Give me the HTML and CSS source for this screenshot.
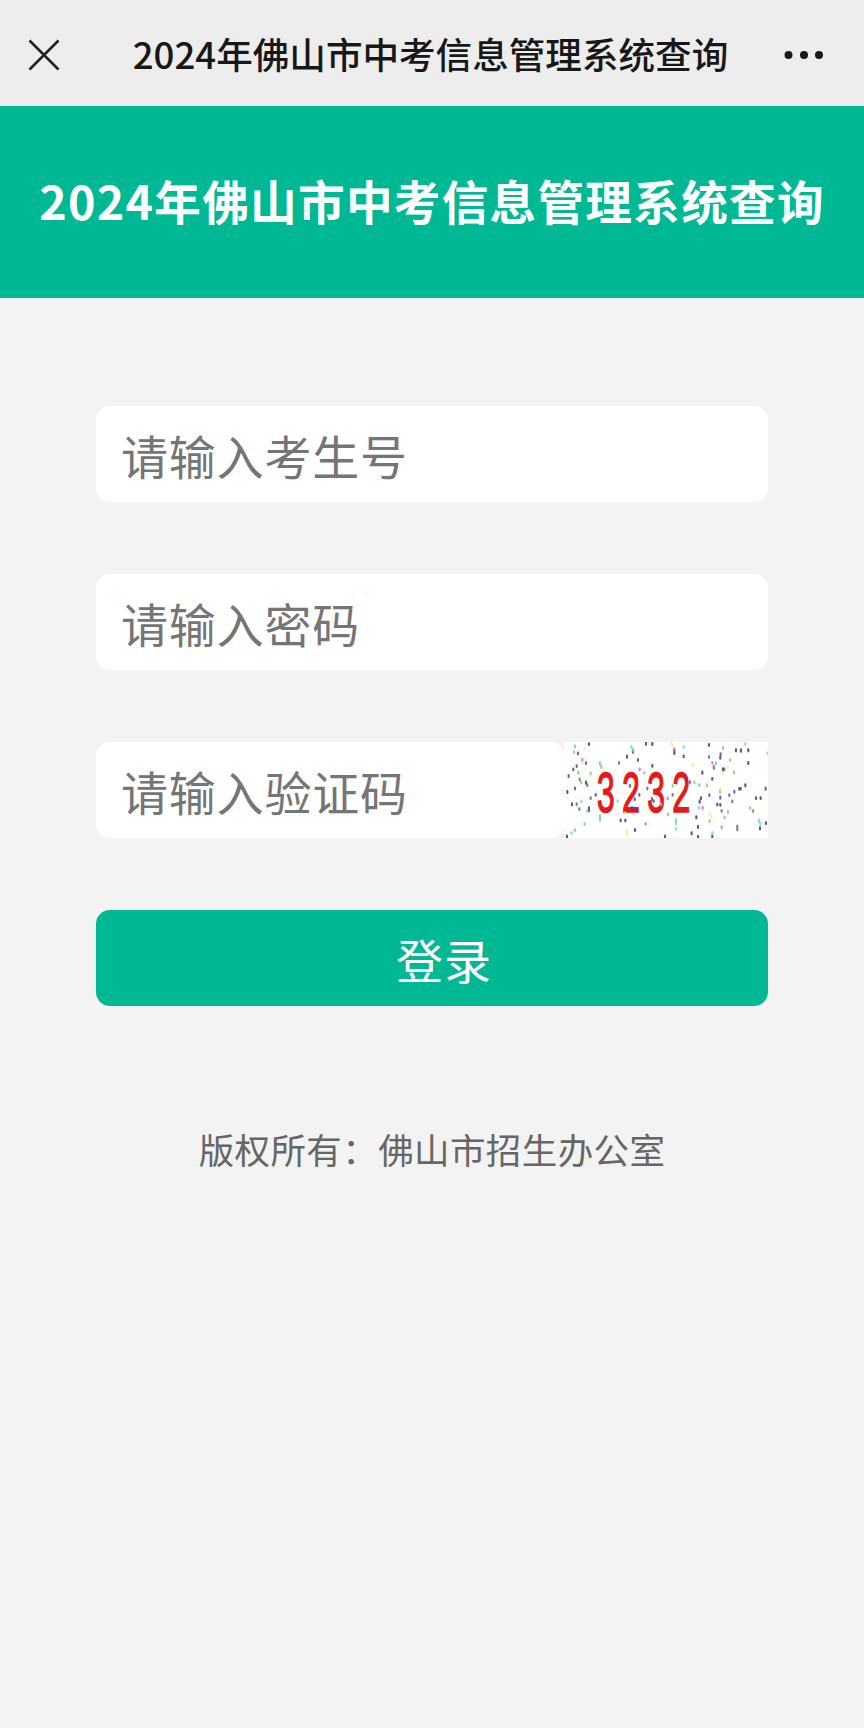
FILE: index.html
```html
<!DOCTYPE html>
<html lang="zh-CN">
<head>
<meta charset="utf-8">
<title>2024年佛山市中考信息管理系统查询</title>
<link rel="stylesheet" href="styles.css">
</head>
<body>
<nav class="navbar">
  <svg class="close" viewBox="0 0 32 32"><path d="M1.500 1.500L30.500 30.500M30.500 1.500L1.500 30.500"/></svg>
  <span class="nav-title">2024年佛山市中考信息管理系统查询</span>
  <svg class="more" viewBox="0 0 40 10"><circle cx="4.500" cy="5" r="4"/><circle cx="20" cy="5" r="4"/><circle cx="35" cy="5" r="4"/></svg>
</nav>
<header class="banner"><h1>2024年佛山市中考信息管理系统查询</h1></header>
<form class="login">
  <input class="field" type="text" placeholder="请输入考生号">
  <input class="field" type="password" placeholder="请输入密码">
  <div class="row">
    <input class="field" type="text" placeholder="请输入验证码">
    <svg class="captcha" viewBox="0 0 204 96">
      <text class="code" transform="translate(32 70) scale(.54 1)">3232</text>
      <g class="noise" transform="translate(-14 -12) scale(.3333)">
        <path stroke="#33305c" d="M117 40v5M288 39v5M307 38v7M231 77v6M307 105v5M477 42v5M558 58v6M573 58v7M595 58v6M595 96v6M373 60v12M401 77v5M457 125v6M487 144v5M52 183v6M51 317v6M66 220v6M117 232v12M212 269v5M226 269v5M255 297v6M345 317v5M425 307v6M444 288v6M444 318v6M439 259v6M453 202v5M449 212v6M502 221v5M511 222v5M568 174v5M572 174v4M586 163v6M618 202v5M632 202v5M630 292v6M648 277v5M487 317v5M108 155v6M511 80v6M519 115v6"/>
        <path stroke="#4b3f9c" d="M84 68v5M80 106v5M70 116v5M108 97v5M56 135v6M75 173v5M137 192v5M268 192v5M254 205v5M306 204v6M311 211v5M246 231v6M258 237v6M264 87v6M410 146v6M553 183v5M647 173v6M478 193v5M511 200v6M512 70v5M249 62v6M240 165v5"/>
        <path stroke="#80506f" d="M89 146v5M112 163v5M122 202v5M80 220v5M88 235v5M207 96v5M292 173v5M368 192v5M538 193v5M547 212v5M515 240v5M609 240v5M562 287v14M523 116v5M420 154v5M477 78v5M492 111v5"/>
        <path stroke="#d45bd0" d="M97 87v5M269 116v5M353 203v5M287 279v5M458 231v5M487 96v4M491 107v5M515 290v5M373 55v5"/>
        <path stroke="#68d56c" d="M75 47v5M85 125v6M150 96v8M154 107v7M122 128v5M94 155v5M150 256v16M75 298v5M104 280v5M283 126v5M368 165v5M354 251v5M433 155v5M448 163v5M471 164v5M519 52v5M540 88v5M552 125v5M510 183v5M534 243v5M524 260v5M479 270v6M600 231v5M498 98v5"/>
        <path stroke="#62dcd2" d="M72 64v5M244 48v5M248 55v8M401 48v5M94 212v5M112 240v5M65 307v5M203 211v5M378 267v16M378 294v5M627 269v7M631 278v6M487 307v5M446 231v5M653 68v5M586 40v5M333 221v5"/>
        <path stroke="#f2ec83" d="M104 54v4M364 38v5M370 46v6M429 104v6M226 247v4M231 302v14M510 174v5M479 250v6M484 258v6M519 127v6M533 109v5M98 97v4M268 155v5M605 237v5"/>
      </g>
    </svg>
  </div>
  <button class="submit" type="button">登录</button>
</form>
<footer class="copyright">版权所有：佛山市招生办公室</footer>
</body>
</html>
```

FILE: styles.css
```css
* { box-sizing: border-box; }
body { margin: 0; min-height: 1728px; background: #f3f3f3; font-family: "Noto Sans CJK SC", sans-serif; }
.navbar { height: 106px; background: #ededed; display: flex; align-items: center; padding: 3px 40px 0 28px; }
.close { width: 32px; height: 32px; stroke: #222; stroke-width: 2.6; fill: none; }
.nav-title { flex: 1; padding: 0 0 2px 17px; text-align: center; font-size: 36.6px; font-weight: 500; color: #181818; white-space: nowrap; }
.more { width: 40px; height: 10px; fill: #181818; }
.banner { height: 192px; background: #00b894; display: flex; justify-content: center; padding-top: 59px; }
.banner h1 { margin: 0; color: #fff; font-size: 46.6px; line-height: 70px; letter-spacing: 1.3px; font-weight: 700; white-space: nowrap; }
.login { display: flex; flex-direction: column; gap: 72px; padding: 108px 96px 0; }
.field { width: 100%; min-width: 0; height: 96px; border: 0; border-radius: 14px; background: #fff; padding: 1px 24px 0 25px; font: 47px "Noto Sans CJK SC", sans-serif; letter-spacing: .8px; }
.field::placeholder { color: #757575; opacity: 1; }
.row { display: flex; height: 96px; }
.row .field { flex: 1; }
.captcha { width: 204px; height: 96px; background: #fff; }
.code { font: 60px "Liberation Mono", monospace; letter-spacing: 10.6px; fill: #e81818; stroke: #e81818; stroke-width: 1.4; }
.noise path { fill: none; stroke-width: 6.5; stroke-linecap: round; opacity: .8; }
.submit { height: 96px; border: 0; border-radius: 14px; background: #00b894; color: #fff; font: 47px "Noto Sans CJK SC", sans-serif; letter-spacing: 1px; padding: 0 0 0 24px; }
.copyright { margin-top: 116px; text-align: center; font-size: 35.5px; letter-spacing: .4px; line-height: 54px; color: #666; }
```
